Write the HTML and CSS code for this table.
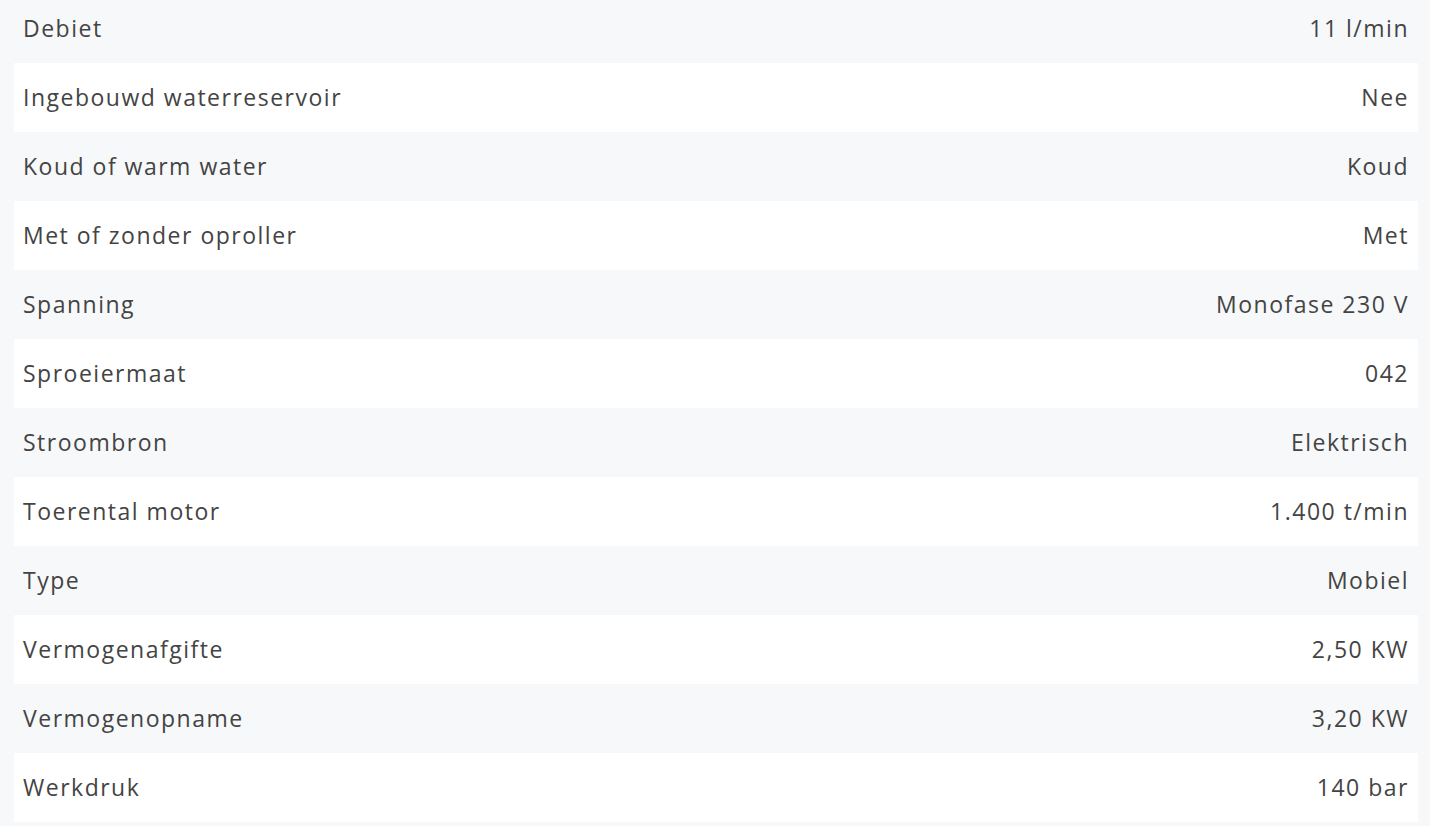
FILE: index.html
```html
<!DOCTYPE html>
<html lang="nl">
<head>
  <meta charset="UTF-8">
  <title>Specificaties</title>
  <link rel="stylesheet" href="styles.css">
</head>
<body>
  <table class="specs">
    <tbody>
      <tr><td>Debiet</td><td>11 l/min</td></tr>
      <tr><td>Ingebouwd waterreservoir</td><td>Nee</td></tr>
      <tr><td>Koud of warm water</td><td>Koud</td></tr>
      <tr><td>Met of zonder oproller</td><td>Met</td></tr>
      <tr><td>Spanning</td><td>Monofase 230 V</td></tr>
      <tr><td>Sproeiermaat</td><td>042</td></tr>
      <tr><td>Stroombron</td><td>Elektrisch</td></tr>
      <tr><td>Toerental motor</td><td>1.400 t/min</td></tr>
      <tr><td>Type</td><td>Mobiel</td></tr>
      <tr><td>Vermogenafgifte</td><td>2,50 KW</td></tr>
      <tr><td>Vermogenopname</td><td>3,20 KW</td></tr>
      <tr><td>Werkdruk</td><td>140 bar</td></tr>
    </tbody>
  </table>
</body>
</html>
```

FILE: styles.css
```css
body {
  margin: 0;
  background: #f7f8fa;
  font-family: "Open Sans", Arial, sans-serif;
  color: #444;
}

.specs {
  width: calc(100% - 26px);
  margin: -6px 12px 0 14px;
  border-collapse: collapse;
  font-size: 23px;
  letter-spacing: 1.5px;
}

.specs td {
  height: 67px;
  padding: 0 9px 2px 9px;
  vertical-align: middle;
}

.specs td:last-child {
  text-align: right;
}

.specs tr:nth-child(even) {
  background: #fff;
}
```
